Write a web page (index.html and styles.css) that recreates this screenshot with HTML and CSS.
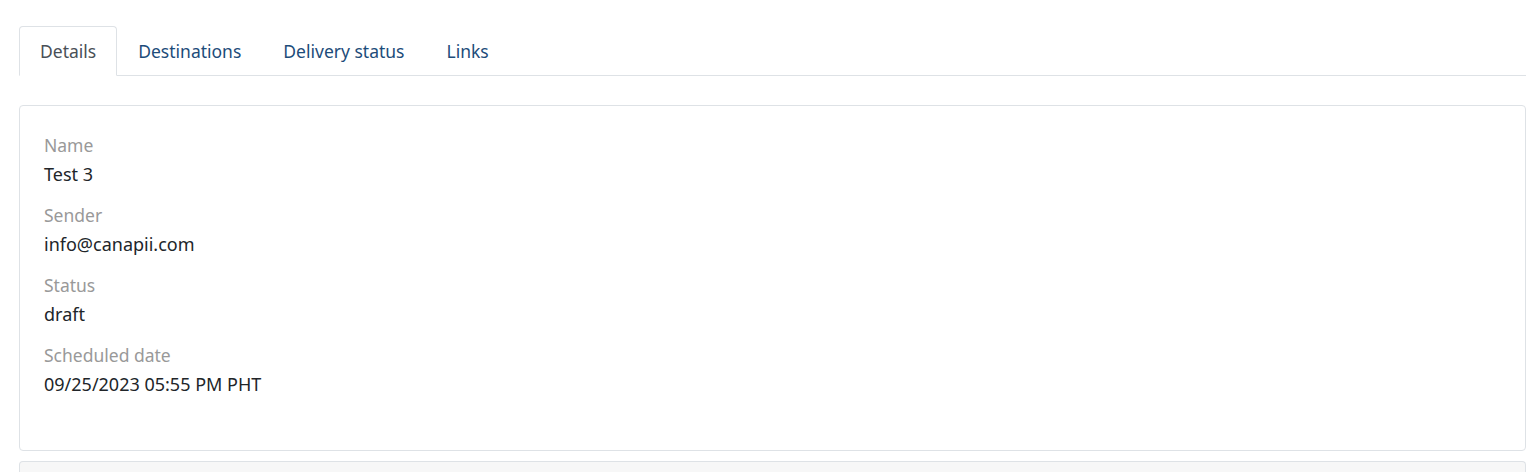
FILE: index.html
```html
<!DOCTYPE html>
<html lang="en">
<head>
<meta charset="utf-8">
<title>Details</title>
<link rel="stylesheet" href="styles.css">
</head>
<body>
<div class="page">
  <ul class="tabs">
    <li class="tab active">Details</li>
    <li class="tab">Destinations</li>
    <li class="tab">Delivery status</li>
    <li class="tab">Links</li>
  </ul>
  <div class="card">
    <div class="field">
      <div class="label">Name</div>
      <div class="value">Test 3</div>
    </div>
    <div class="field">
      <div class="label">Sender</div>
      <div class="value">info@canapii.com</div>
    </div>
    <div class="field">
      <div class="label">Status</div>
      <div class="value">draft</div>
    </div>
    <div class="field">
      <div class="label">Scheduled date</div>
      <div class="value">09/25/2023 05:55 PM PHT</div>
    </div>
  </div>
  <div class="card next"></div>
</div>
</body>
</html>
```
FILE: styles.css
```css
html, body {
  margin: 0;
  padding: 0;
  background: #fff;
  overflow: hidden;
}
body {
  font-family: "Noto Sans", "Open Sans", sans-serif;
  font-size: 17.5px;
  color: #212529;
}
.page {
  padding: 26px 10px 0 19px;
}
.tabs {
  list-style: none;
  margin: 0;
  padding: 0;
  display: flex;
  border-bottom: 1px solid #dee2e6;
}
.tab {
  padding: 12px 20px;
  line-height: 24px;
  color: #1d4c7a;
  border: 1px solid transparent;
  border-top-left-radius: 4px;
  border-top-right-radius: 4px;
  margin-bottom: -1px;
}
.tab.active {
  color: #495057;
  background: #fff;
  border-color: #dee2e6 #dee2e6 #fff;
}
.card {
  margin-top: 29px;
  border: 1px solid #dee2e6;
  border-radius: 4px;
  padding: 27px 24px 37px;
  background: #fff;
}
.field {
  margin-bottom: 17px;
}
.label {
  color: #999;
  line-height: 24px;
  margin-bottom: 5px;
}
.value {
  font-size: 18px;
  line-height: 24px;
}
.card.next {
  margin-top: 10px;
  background: #f7f7f7;
  height: 10px;
  padding: 0;
  border-bottom: none;
  border-bottom-left-radius: 0;
  border-bottom-right-radius: 0;
}
```
